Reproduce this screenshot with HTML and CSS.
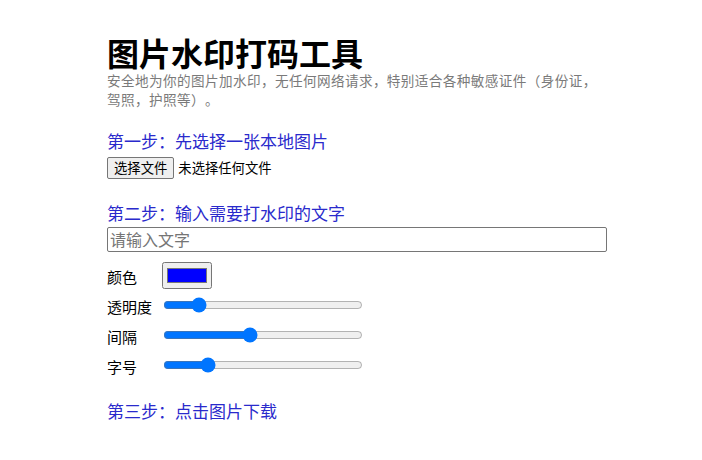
FILE: index.html
```html
<!DOCTYPE html>
<html lang="zh-CN">
<head>
<meta charset="utf-8">
<title>图片水印打码工具</title>
<link rel="stylesheet" href="styles.css">
</head>
<body>
<main class="page">
  <h1 class="title">图片水印打码工具</h1>
  <p class="intro">安全地为你的图片加水印，无任何网络请求，特别适合各种敏感证件（身份证，<br>驾照，护照等）。</p>

  <h2 class="step-title step-one">第一步：先选择一张本地图片</h2>
  <label class="file-row">
    <input class="file-native" type="file" accept="image/*">
    <span class="file-button">选择文件</span>
    <span class="file-status">未选择任何文件</span>
  </label>

  <h2 class="step-title step-two">第二步：输入需要打水印的文字</h2>
  <input class="text-input" type="text" placeholder="请输入文字">

  <div class="controls">
    <div class="row"><label class="label">颜色</label><input class="color-input" type="color" value="#0000ff"></div>
    <div class="row"><label class="label">透明度</label><input class="range" type="range" min="0" max="100" value="15"></div>
    <div class="row"><label class="label">间隔</label><input class="range" type="range" min="0" max="100" value="43"></div>
    <div class="row"><label class="label">字号</label><input class="range" type="range" min="0" max="100" value="20"></div>
  </div>

  <h2 class="step-title step-three">第三步：点击图片下载</h2>
</main>
</body>
</html>
```

FILE: styles.css
```css
html, body {
  margin: 0;
  background: #ffffff;
}

body {
  font-family: "Noto Sans CJK SC", "Noto Sans", sans-serif;
  color: #000000;
  text-spacing-trim: space-all;
}

.page {
  width: 500px;
  margin-left: 107px;
  padding-top: 33px;
}

.title {
  margin: 0;
  font-size: 32px;
  line-height: 38px;
  font-weight: 700;
}

.intro {
  margin: 0;
  font-size: 13.6px;
  line-height: 19px;
  letter-spacing: 0.4px;
  color: #7a7a7a;
}

.step-title {
  margin: 0;
  font-size: 17px;
  line-height: 24px;
  font-weight: 400;
  color: #2a2acc;
}

.step-one {
  margin-top: 20px;
}

.file-row {
  margin-top: 3.5px;
  height: 22px;
  display: flex;
  align-items: center;
  cursor: default;
}

.file-native {
  display: none;
}

.file-button {
  box-sizing: border-box;
  height: 22px;
  padding: 0 6px;
  border: 1px solid #767676;
  border-radius: 2px;
  background: #efefef;
  font-size: 13.33px;
  line-height: 20px;
  color: #000;
}

.file-status {
  margin-left: 4px;
  font-size: 13.33px;
  line-height: 20px;
  color: #000;
}

.step-two {
  margin-top: 22.5px;
}

.text-input {
  display: block;
  box-sizing: border-box;
  width: 100%;
  height: 25px;
  margin: 1.5px 0 0;
  padding: 1px 2px;
  border: 1px solid #767676;
  border-radius: 2px;
  font-family: "Noto Sans CJK SC", sans-serif;
  font-size: 16px;
  line-height: 21px;
}

.text-input::placeholder {
  color: #757575;
}

.controls {
  margin-top: 8.5px;
  display: flex;
  flex-direction: column;
}

.row {
  height: 30px;
  display: flex;
  align-items: center;
}

.label {
  width: 54px;
  flex: none;
  font-size: 15px;
  line-height: 20px;
  padding-top: 3px;
}

.color-input {
  width: 50px;
  height: 27px;
  margin: 0 0 0 1px;
}

.range {
  width: 200px;
  margin: 2px;
}

.step-three {
  margin-top: 19px;
}
```
